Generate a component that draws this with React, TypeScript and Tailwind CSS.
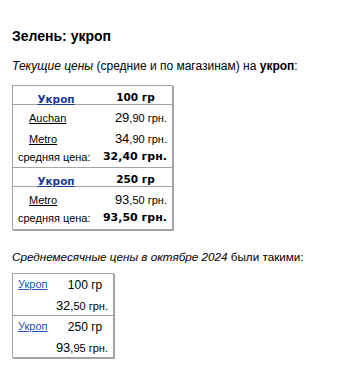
const sans = "font-['Liberation_Sans',Arial,sans-serif]"
const wide = "font-['DejaVu_Sans',Verdana,sans-serif]"

function Price({ whole, cents }: { whole: string; cents: string }) {
  return (
    <span className={`${sans} whitespace-nowrap text-black`}>
      <span className="text-[13px]">{whole}</span>
      <span className="text-[11px]">,{cents} грн.</span>
    </span>
  )
}

function HeaderRow({ weight }: { weight: string }) {
  return (
    <div className="grid grid-cols-[86px_1fr] h-[19px] items-center border-b border-[#a4a4a4]">
      <div className="text-center">
        <a href="#" className={`${wide} text-[10.5px] font-bold text-[#1c3a94] underline`}>Укроп</a>
      </div>
      <div className={`${wide} whitespace-nowrap text-center text-[10.5px] font-bold text-black`}>{weight}</div>
    </div>
  )
}

function ShopRow({ shop, whole, cents }: { shop: string; whole: string; cents: string }) {
  return (
    <div className="grid grid-cols-[86px_1fr] h-[21px] items-center">
      <div className="pl-[16px]">
        <a href="#" className={`${sans} text-[11px] text-black underline`}>{shop}</a>
      </div>
      <div className="text-right pr-[5px]">
        <Price whole={whole} cents={cents} />
      </div>
    </div>
  )
}

function AvgRow({ value, last }: { value: string; last?: boolean }) {
  return (
    <div className={`grid grid-cols-[86px_1fr] h-[21px] items-center ${last ? '' : 'border-b border-[#a4a4a4]'}`}>
      <div className={`${sans} whitespace-nowrap pl-[5px] text-[11px] text-black`}>средняя цена:</div>
      <div className={`${wide} whitespace-nowrap text-right pr-[5px] text-[11px] font-bold text-black`}>{value}</div>
    </div>
  )
}

function MonthBlock({ weight, whole, cents, last }: { weight: string; whole: string; cents: string; last?: boolean }) {
  return (
    <div className={last ? '' : 'border-b border-[#a4a4a4]'}>
      <div className="grid grid-cols-[44px_1fr] h-[21px] items-center">
        <a href="#" className={`${sans} pl-[5px] text-[11px] text-[#2050b8] underline`}>Укроп</a>
        <div className={`${sans} text-center text-[12px] text-black`}>{weight}</div>
      </div>
      <div className="h-[20px] flex items-center justify-end pr-[5px]">
        <Price whole={whole} cents={cents} />
      </div>
    </div>
  )
}

export default function App() {
  return (
    <div className={`${sans} w-[352px] h-[368px] bg-white px-[12px] pt-[27px] text-black`}>
      <h2 className="text-[14px] font-bold leading-[18px]">Зелень: укроп</h2>
      <p className="mt-[14px] text-[12px] leading-[14px]">
        <i>Текущие цены</i> (средние и по магазинам) на <b>укроп</b>:
      </p>

      <div className="mt-[12px] w-[161px] border border-[#a4a4a4] shadow-[1px_1px_0_#a4a4a4]">
        <HeaderRow weight="100 гр" />
        <ShopRow shop="Auchan" whole="29" cents="90" />
        <ShopRow shop="Metro" whole="34" cents="90" />
        <AvgRow value="32,40 грн." />
        <HeaderRow weight="250 гр" />
        <ShopRow shop="Metro" whole="93" cents="50" />
        <AvgRow value="93,50 грн." last />
      </div>

      <p className="mt-[20px] text-[11.7px] leading-[14px]">
        <i>Среднемесячные цены в октябре 2024</i> были такими:
      </p>

      <div className="mt-[9px] w-[102px] border border-[#a4a4a4] shadow-[1px_1px_0_#a4a4a4]">
        <MonthBlock weight="100 гр" whole="32" cents="50" />
        <MonthBlock weight="250 гр" whole="93" cents="95" last />
      </div>
    </div>
  )
}
